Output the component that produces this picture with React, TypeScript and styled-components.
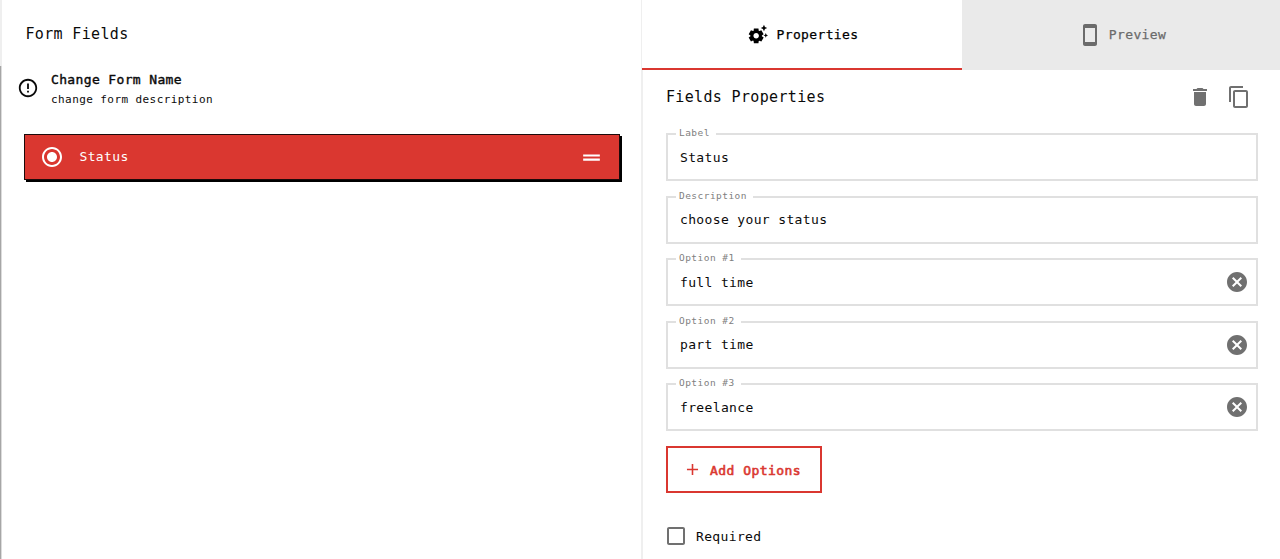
import React from "react";
import styled, { createGlobalStyle } from "styled-components";
import {
  MdAdd,
  MdCancel,
  MdCheckBoxOutlineBlank,
  MdContentCopy,
  MdDelete,
  MdDragHandle,
  MdErrorOutline,
  MdRadioButtonChecked,
  MdSettingsSuggest,
  MdStayCurrentPortrait,
} from "react-icons/md";

const red = "#da3730";
const grey = "#707070";

const GlobalStyle = createGlobalStyle`
  *, *::before, *::after { box-sizing: border-box; }
  body {
    margin: 0;
    overflow: hidden;
    background: #fff;
    color: #0a0a0a;
    font-family: "DejaVu Sans Mono", "Liberation Mono", monospace;
    font-size: 13px;
    letter-spacing: 0.36px;
  }
  svg { display: block; flex: none; }
  button, input { font: inherit; letter-spacing: inherit; color: inherit; }
`;

const Page = styled.div`
  display: flex;
  height: 559px;
`;

const ScrollRail = styled.div`
  width: 2px;
  flex: none;
  padding-top: 66px;
  background: #efefef;
`;

const ScrollThumb = styled.div`
  height: 100%;
  border-right: 1px solid #dcdcdc;
  background: #a6a6a6;
`;

const FieldsPanel = styled.section`
  width: 641px;
  flex: none;
  padding: 24px 20px 0 15px;
  border-right: 2px solid #efefef;
`;

const Heading = styled.h2`
  margin: 0;
  font-size: 15px;
  font-weight: 400;
  line-height: 20px;
  letter-spacing: 0.34px;
`;

const FieldsHeading = styled(Heading)`
  padding-left: 8.5px;
`;

const FormInfo = styled.div`
  display: flex;
  align-items: center;
  gap: 12px;
  margin-top: 24px;
  height: 42px;
  svg { margin-bottom: 3px; }
`;

const FormName = styled.div`
  line-height: 21px;
  -webkit-text-stroke: 0.4px currentColor;
`;

const FormDescription = styled.div`
  font-size: 11px;
  line-height: 20px;
  letter-spacing: 0.42px;
`;

const FieldRow = styled.div`
  display: flex;
  align-items: center;
  width: 596px;
  height: 46px;
  margin: 24px 0 0 6.5px;
  padding: 0 15px 0 15px;
  border: 1px solid #1c0a0a;
  background: ${red};
  box-shadow: 2px 2px 0 #000;
  color: #fff;
`;

const FieldName = styled.span`
  flex: 1;
  margin: 0 0 1px 16px;
`;

const PropertiesPanel = styled.aside`
  flex: 1;
  min-width: 0;
`;

const Tabs = styled.div`
  display: flex;
  height: 70px;
  margin-left: -1px;
`;

const Tab = styled.button<{ $active?: boolean; $gap: number }>`
  display: flex;
  align-items: center;
  justify-content: center;
  gap: ${({ $gap }) => $gap}px;
  width: ${({ $active }) => ($active ? 320 : 318)}px;
  padding: ${({ $active }) => ($active ? "0 0 0 1px" : "0 0 1px 2px")};
  border: 0;
  border-bottom: ${({ $active }) => ($active ? `2px solid ${red}` : "0")};
  background: ${({ $active }) => ($active ? "#fff" : "#eaeaea")};
  color: ${({ $active }) => ($active ? "#000" : "#6b6b6b")};
  -webkit-text-stroke: 0.25px currentColor;
  svg { stroke: none; stroke-width: 0; }
`;

const Body = styled.div`
  padding: 15px 22px 0 23px;
`;

const TitleBar = styled.div`
  display: flex;
  align-items: center;
  justify-content: space-between;
  height: 24px;
  padding-right: 7px;
`;

const Actions = styled.div`
  display: flex;
  align-items: center;
  gap: 15px;
  color: ${grey};
`;

const Fields = styled.div`
  display: flex;
  flex-direction: column;
  gap: 9.5px;
  margin-top: 19px;
`;

const Outline = styled.fieldset`
  display: flex;
  align-items: center;
  min-width: 0;
  height: 53px;
  margin: 0;
  padding: 0 7px 0 8px;
  border: 2px solid #e0e0e0;
  svg { margin-top: -1px; }
`;

const Legend = styled.legend`
  height: 12px;
  padding: 0 6px 0 3px;
  color: #808080;
  font-size: 9.5px;
  line-height: 10px;
  letter-spacing: 0.46px;
`;

const Input = styled.input`
  flex: 1;
  min-width: 0;
  height: 36px;
  margin-top: -1px;
  padding: 0 0 0 4px;
  border: 0;
  outline: 0;
  background: transparent;
`;

const AddButton = styled.button`
  display: flex;
  align-items: center;
  gap: 8px;
  width: 156px;
  height: 47px;
  margin-top: 15px;
  padding: 0 15px;
  border: 2px solid ${red};
  background: #fff;
  color: ${red};
`;

const AddLabel = styled.span`
  padding-top: 2px;
  letter-spacing: 0.46px;
  -webkit-text-stroke: 0.6px currentColor;
`;

const Required = styled.label`
  display: flex;
  align-items: center;
  gap: 8px;
  margin: 31px 0 0 -2px;
  svg { color: ${grey}; }
`;

const fields = [
  { label: "Label", value: "Status" },
  { label: "Description", value: "choose your status" },
  { label: "Option #1", value: "full time", removable: true },
  { label: "Option #2", value: "part time", removable: true },
  { label: "Option #3", value: "freelance", removable: true },
];

export default function App() {
  return (
    <Page>
      <GlobalStyle />
      <ScrollRail>
        <ScrollThumb />
      </ScrollRail>
      <FieldsPanel>
        <FieldsHeading>Form Fields</FieldsHeading>
        <FormInfo>
          <MdErrorOutline size={22} />
          <div>
            <FormName>Change Form Name</FormName>
            <FormDescription>change form description</FormDescription>
          </div>
        </FormInfo>
        <FieldRow>
          <MdRadioButtonChecked size={24} />
          <FieldName>Status</FieldName>
          <MdDragHandle size={25} />
        </FieldRow>
      </FieldsPanel>
      <PropertiesPanel>
        <Tabs>
          <Tab $active $gap={8}>
            <MdSettingsSuggest size={22} />
            Properties
          </Tab>
          <Tab $gap={7}>
            <MdStayCurrentPortrait size={24} />
            Preview
          </Tab>
        </Tabs>
        <Body>
          <TitleBar>
            <Heading>Fields Properties</Heading>
            <Actions>
              <MdDelete size={24} />
              <MdContentCopy size={24} />
            </Actions>
          </TitleBar>
          <Fields>
            {fields.map(({ label, value, removable }) => (
              <Outline key={label}>
                <Legend>{label}</Legend>
                <Input defaultValue={value} />
                {removable && <MdCancel size={24} color={grey} />}
              </Outline>
            ))}
          </Fields>
          <AddButton>
            <MdAdd size={19} />
            <AddLabel>Add Options</AddLabel>
          </AddButton>
          <Required>
            <MdCheckBoxOutlineBlank size={24} />
            Required
          </Required>
        </Body>
      </PropertiesPanel>
    </Page>
  );
}
